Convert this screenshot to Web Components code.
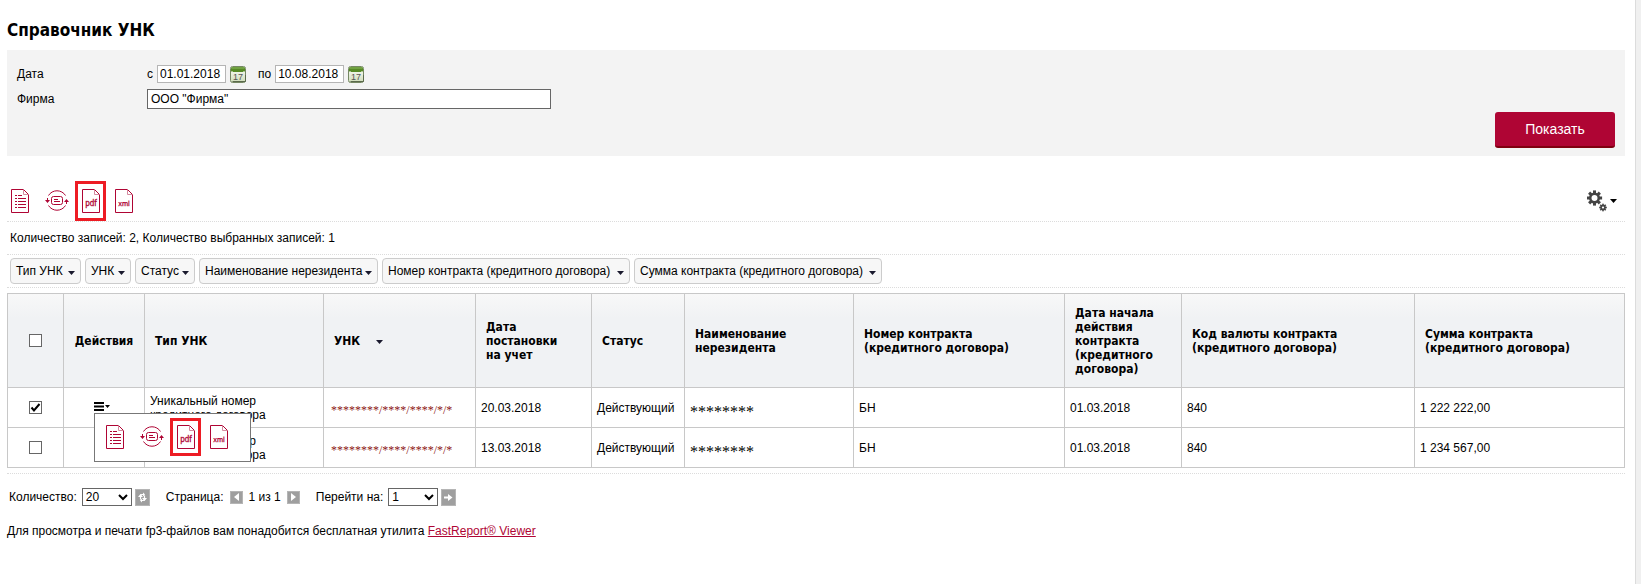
<!DOCTYPE html>
<html lang="ru">
<head>
<meta charset="utf-8">
<title>Справочник УНК</title>
<style>
html,body{margin:0;background:#fff;color:#000;font:12px/15px "Liberation Sans",sans-serif}
</style>
</head>
<body>
<unk-page>
  <filter-panel></filter-panel>
  <action-toolbar></action-toolbar>
  <sort-bar></sort-bar>
  <records-table></records-table>
  <pager-bar></pager-bar>
  <viewer-note></viewer-note>
</unk-page>
<script>
const define = (name, markup) => {
  const template = document.createElement('template');
  template.innerHTML = '<style>:host,*{box-sizing:border-box}button,input,select{font:inherit;color:inherit;margin:0}</style>' + markup;
  customElements.define(name, class extends HTMLElement {
    constructor() {
      super();
      this.attachShadow({ mode: 'open' }).append(template.content.cloneNode(true));
    }
  });
};

define('unk-page', `
<style>
:host{display:flex;min-height:100vh}
main{flex:1;min-width:0;padding:20px 10px 0 7px}
h1{margin:0 0 10px;font:bold 17px/20px "DejaVu Sans Condensed",sans-serif}
.edge{flex:0 0 6px;background:#f0f0f0;border-left:1px solid #dcdcdc}
</style>
<main><h1>Справочник УНК</h1><slot></slot></main>
<div class="edge"></div>`);

define('calendar-button', `
<style>
:host{display:inline-flex}
button{padding:0;border:0;background:none;width:16px;height:17px}
svg{display:block}
</style>
<button type="button" aria-label="Календарь"><svg width="16" height="17" viewBox="0 0 16 17">
<defs><linearGradient id="g" x2="0" y2="1"><stop stop-color="#fff"/><stop offset="1" stop-color="#cfdcb8"/></linearGradient></defs>
<rect x=".5" y=".5" width="15" height="16" rx="2" fill="url(#g)" stroke="#768864"/>
<path d="M1 6V2.500Q1 1 2.500 1H13.500Q15 1 15 2.500V6Z" fill="#568b25"/><path d="M2 2H14" stroke="#8cb861"/>
<path d="M2 5v1M14 5v1" stroke="#fff"/><path d="M15.500 9v6.500h-13" fill="none" stroke="#5b6a4c"/>
<text x="8" y="14" text-anchor="middle" font-family="Liberation Sans" font-size="9" fill="#555">17</text></svg></button>`);

define('filter-panel', `
<style>
:host{display:block;background:#f3f3f3;padding:15px 10px 8px}
form{display:grid;grid-template-columns:130px 1fr;row-gap:6px;align-items:center}
.dates{display:flex;align-items:center;gap:4px;height:18px}
.dates input{width:69px;height:18px;padding:0 2px;border:1px solid #b5b5b5;background:#fff}
.dates .to{margin-left:8px}
.firm{width:404px;height:20px;padding:0 3px;border:1px solid #666;background:#fff}
.submit{grid-column:2;justify-self:end;width:120px;height:36px;margin-top:-3px;border:0;border-bottom:2px solid #800010;border-radius:3px;background:#af0534;color:#fff;font:14px "Liberation Sans",sans-serif}
</style>
<form>
<label for="from">Дата</label>
<div class="dates"><label for="from">с</label><input id="from" value="01.01.2018"><calendar-button></calendar-button><label class="to" for="till">по</label><input id="till" value="10.08.2018"><calendar-button></calendar-button></div>
<label for="firm">Фирма</label><input id="firm" class="firm" value='ООО "Фирма"'>
<button class="submit" type="button">Показать</button>
</form>`);

const page = '<path d="M.500.500h12l5 5v18h-17z" fill="#fff" stroke="#af0534"/><path d="M12.500.500v5h5" fill="none" stroke="#d58ba0"/>';
define('document-actions', `
<style>
:host{display:flex;align-items:center}
button{display:flex;align-items:center;justify-content:center;padding:0;border:0;background:none}
svg{display:block}
.refresh{margin-left:16px}
.pdf{width:31px;height:var(--box,40px);margin:0 9px 0 5px;border:3px solid #ed1c24}
text{font:8px "DejaVu Sans Condensed",sans-serif;fill:#af0534;stroke:#af0534;stroke-width:.3px}
</style>
<button type="button" aria-label="Открыть"><svg width="18" height="24">${page}<path d="M4 6h2m1 0h4M4 9h2m1 0h8M4 12h2m1 0h8M4 15h2m1 0h8M4 18h2m1 0h8" transform="translate(0 .5)" stroke="#af0534" fill="none"/></svg></button>
<button type="button" class="refresh" aria-label="Обновить"><svg width="25" height="24" fill="none" stroke="#af0534">
<rect x="6.500" y="7.500" width="11" height="8" rx="2"/><path d="M9 10.500h4M9 12.500h6"/>
<path d="M3.500 6.500A10 10 0 0 1 20.500 6.500M3.500 16.500A10 10 0 0 0 20.500 16.500"/>
<path d="M2.500 9v4M21.500 11v4"/><path d="M0 11h5l-2.500 3zM19 13h5l-2.500-3z" fill="#af0534" stroke="none"/></svg></button>
<button type="button" class="pdf"><svg width="18" height="24">${page}<text x="9" y="17" text-anchor="middle">pdf</text></svg></button>
<button type="button"><svg width="18" height="24">${page}<text x="9" y="17" text-anchor="middle" style="font-size:7px">xml</text></svg></button>`);

const gear = (cx, cy, r, hole, tooth) => {
  let teeth = '';
  for (let a = 0; a < 360; a += 45) teeth += `<rect x="${cx - tooth / 2}" y="${cy - r - tooth * .7}" width="${tooth}" height="${tooth + 1}" transform="rotate(${a} ${cx} ${cy})"/>`;
  return `<g fill="#444">${teeth}<circle cx="${cx}" cy="${cy}" r="${(r + hole) / 2}" fill="none" stroke="#444" stroke-width="${r - hole}"/></g>`;
};
define('action-toolbar', `
<style>
:host{display:block}
.icons{display:flex;justify-content:space-between;align-items:center;height:66px;padding:24px 8px 0 4px;border-bottom:1px dotted #dcdcdc}
.settings{padding:0;border:0;background:none}
svg{display:block}
p{margin:0;height:33px;padding:9px 3px;border-bottom:1px dotted #dcdcdc}
</style>
<div class="icons"><document-actions></document-actions>
<button class="settings" type="button" aria-label="Настройки"><svg width="30" height="22">${gear(7.5, 8, 5.5, 3, 3)}${gear(16, 17.5, 2.7, 1.3, 1.6)}<path d="M23 9h7l-3.500 4z"/></svg></button></div>
<p>Количество записей: 2, Количество выбранных записей: 1</p>`);

define('sort-button', `
<style>
:host{display:flex}
button{flex:1;display:flex;align-items:center;justify-content:space-between;height:26px;padding:0 5px;border:1px solid #ccc;border-radius:4px;background:#f7f7f7;white-space:nowrap}
svg{flex:none;margin-top:4px}
</style>
<button type="button"><span><slot></slot></span><svg width="7" height="4"><path d="M0 0h7L3.500 4z" fill="#1a1a2e"/></svg></button>`);

define('sort-bar', `
<style>
:host{display:flex;gap:4px;height:33px;padding:3px;border-bottom:1px dotted #dcdcdc;margin-bottom:5px}
</style>
<sort-button style="width:71px">Тип УНК</sort-button><sort-button style="width:46px">УНК</sort-button><sort-button style="width:60px">Статус</sort-button><sort-button style="width:179px">Наименование нерезидента</sort-button><sort-button style="width:248px">Номер контракта (кредитного договора)</sort-button><sort-button style="width:248px">Сумма контракта (кредитного договора)</sort-button>`);

define('row-menu', `
<style>
:host{display:inline-block;position:relative;vertical-align:middle}
button{display:block;padding:0;border:0;background:none}
svg{display:block}
.popup{display:none;position:absolute;z-index:1;left:0;top:11px;width:157px;height:49px;padding-left:11px;align-items:center;background:#fff;border:1px solid #777;--box:38px}
:host([open]) .popup{display:flex}
</style>
<button type="button" aria-label="Действия"><svg width="16" height="9"><path d="M0 0h10v2H0zM0 3.500h10v2H0zM0 7h10v2H0zM11 3h5l-2.500 3z"/></svg></button>
<div class="popup"><document-actions></document-actions></div>`);

const row = (date, sum, on) => `<tr><td class="c"><input type="checkbox" aria-label="Выбрать" ${on ? 'checked' : ''}></td><td class="c menu">${on ? '<row-menu open></row-menu>' : ''}</td>
<td>Уникальный номер<br>кредитного договора</td><td class="unk">********/****/****/*/*</td><td>${date}</td><td>Действующий</td><td class="name">********</td><td>БН</td><td>01.03.2018</td><td>840</td><td>${sum}</td></tr>`;
define('records-table', `
<style>
:host{display:block;padding-bottom:5px;border-bottom:1px dotted #dcdcdc}
table{width:100%;table-layout:fixed;border-collapse:collapse}
th,td{border:1px solid #c8c8c8;text-align:left;vertical-align:middle}
th{height:94px;padding:0 10px;font:bold 12px/14px "DejaVu Sans Condensed",sans-serif}
thead tr{background:linear-gradient(#f8f8f8,#f0f2f4 24px)}
th.c,td.c{text-align:center;padding:0}
td{height:40px;padding:0 5px;line-height:14px;white-space:nowrap}
td.c.menu{padding:0 4px 4px 0}
td.unk{padding:6px 0 0 7px;font:12px "Liberation Serif",serif;color:#8c1414}
td.name{padding:8px 0 0 5px;font:16px/16px "Liberation Serif",serif}
input{appearance:none;display:block;width:13px;height:13px;margin:0 auto;border:1px solid #666;background:#fff}
input:checked{background:#fff url("data:image/svg+xml,%3Csvg xmlns='http://www.w3.org/2000/svg' width='11' height='11'%3E%3Cpath d='M1.500 5.500L4 8.500L9.500 2' fill='none' stroke='black' stroke-width='2'/%3E%3C/svg%3E")}
.sort{margin:2px 0 0 12px;vertical-align:middle}
</style>
<table>
<colgroup><col style="width:56px"><col style="width:81px"><col style="width:179px"><col style="width:152px"><col style="width:116px"><col style="width:93px"><col style="width:169px"><col style="width:211px"><col style="width:117px"><col style="width:233px"><col></colgroup>
<thead><tr><th class="c"><input type="checkbox" aria-label="Выбрать все"></th><th class="c">Действия</th><th>Тип УНК</th><th>УНК <svg class="sort" width="7" height="4"><path d="M0 0h7L3.500 4z" fill="#1a1a2e"/></svg></th><th>Дата<br>постановки<br>на учет</th><th>Статус</th><th>Наименование<br>нерезидента</th><th>Номер контракта<br>(кредитного договора)</th><th>Дата начала<br>действия<br>контракта<br>(кредитного<br>договора)</th><th>Код валюты контракта<br>(кредитного договора)</th><th>Сумма контракта<br>(кредитного договора)</th></tr></thead>
<tbody>${row('20.03.2018', '1 222 222,00', true)}${row('13.03.2018', '1 234 567,00', false)}</tbody>
</table>`);

define('pager-bar', `
<style>
:host{display:flex;align-items:center;height:18px;margin:14px 0 0 2px;white-space:nowrap}
.group{display:flex;align-items:center;gap:3px;margin-right:16px}
select{appearance:none;width:50px;height:18px;margin-left:2px;padding:0 3px;border:1px solid #666;border-radius:0;background:#fff url("data:image/svg+xml,%3Csvg xmlns='http://www.w3.org/2000/svg' width='10' height='7'%3E%3Cpath d='M1 1L5 5L9 1' fill='none' stroke='black' stroke-width='2'/%3E%3C/svg%3E") no-repeat right 3px center}
button{padding:0;border:1px solid #b5b5b5;background:#9f9f9f;width:15px;height:17px;display:flex;align-items:center;justify-content:center}
button.s{width:13px;height:13px}
.pages{gap:6px}
svg{display:block;flex:none}
</style>
<div class="group"><label for="n">Количество:</label><select id="n"><option>20</option></select><button type="button" aria-label="Применить"><svg width="9" height="11" fill="none" stroke="#fff" stroke-width="1.200"><path d="M2.500 7.500V3.500Q2.500 2.500 4 2.500H5.500M6.500 3.500V7.500Q6.500 8.500 5 8.500H3.500"/><path d="M0 5h5L2.500 2zM4 6h5L6.500 9zM5 .500v4l2-2zM4 6.500v4l-2-2z" fill="#fff" stroke="none"/></svg></button></div>
<div class="group pages"><span>Страница:</span><button class="s" type="button" aria-label="Назад"><svg width="5" height="8"><path d="M5 0v8L0 4z" fill="#fff"/></svg></button><span>1 из 1</span><button class="s" type="button" aria-label="Вперёд"><svg width="5" height="8"><path d="M0 0v8l5-4z" fill="#fff"/></svg></button></div>
<div class="group"><label for="p">Перейти на:</label><select id="p"><option>1</option></select><button type="button" aria-label="Перейти"><svg width="9" height="9"><path d="M0 3.500h4V1l4.500 3.500L4 8V5.500H0z" fill="#fff"/></svg></button></div>`);

define('viewer-note', `
<style>
:host{display:block;margin-top:18px}
a{color:#af0534}
</style>
Для просмотра и печати fp3-файлов вам понадобится бесплатная утилита <a href="#viewer">FastReport® Viewer</a>`);
</script>
</body>
</html>
